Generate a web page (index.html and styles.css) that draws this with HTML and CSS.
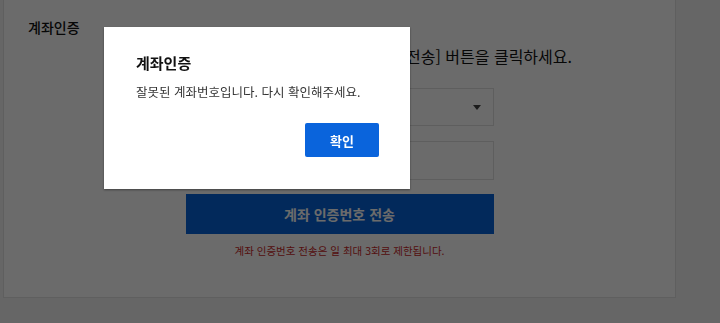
FILE: index.html
```html
<!DOCTYPE html>
<html lang="ko">
<head>
  <meta charset="UTF-8">
  <title>계좌인증</title>
  <link rel="stylesheet" href="styles.css">
</head>
<body>
  <div class="page">
    <div class="card">
      <h2 class="card-title">계좌인증</h2>
      <p class="guide">계좌번호 입력 후 [계좌 인증번호 전송] 버튼을 클릭하세요.</p>

      <div class="form">
        <div class="select-box">
          <span class="arrow"></span>
        </div>
        <input type="text" class="field">
        <button class="send-btn">계좌 인증번호 전송</button>
        <p class="notice">계좌 인증번호 전송은 일 최대 3회로 제한됩니다.</p>
      </div>
    </div>
  </div>

  <div class="dim"></div>

  <div class="modal">
    <h3 class="modal-title">계좌인증</h3>
    <p class="modal-msg">잘못된 계좌번호입니다. 다시 확인해주세요.</p>
    <div class="modal-foot">
      <button class="ok-btn">확인</button>
    </div>
  </div>
</body>
</html>
```

FILE: styles.css
```css
body {
  margin: 0;
  background-color: #f3f3f3;
  font-family: 'Noto Sans CJK KR', 'Noto Sans', sans-serif;
  color: #222;
}

.page {
  padding-left: 3px;
  width: 673px;
}

.card {
  background-color: white;
  border: 1px solid #e2e2e2;
  border-top: none;
  height: 298px;
  padding: 17px 24px 0;
  box-sizing: border-box;
}

.card-title {
  margin: 0;
  font-size: 14px;
  line-height: 20px;
  font-weight: 500;
  color: #111;
}

.guide {
  margin: 8px 0 0;
  font-size: 16px;
  line-height: 22px;
  white-space: nowrap;
  text-align: right;
  padding-right: 79px;
  color: #111;
}

.form {
  width: 308px;
  margin: 21px auto 0;
  display: flex;
  flex-direction: column;
}

.select-box {
  height: 38px;
  border: 1px solid #e0e0e0;
  box-sizing: border-box;
  display: flex;
  align-items: center;
  justify-content: flex-end;
  padding: 0 12px;
}

.arrow {
  width: 0;
  height: 0;
  border-left: 4px solid transparent;
  border-right: 4px solid transparent;
  border-top: 5px solid #444;
}

.field {
  height: 39px;
  margin-top: 15px;
  border: 1px solid #e0e0e0;
  box-sizing: border-box;
  font-size: 14px;
  padding: 0 12px;
}

.send-btn {
  height: 40px;
  margin-top: 14px;
  border: none;
  background-color: #0663d8;
  color: #ffffff;
  font-family: inherit;
  font-size: 14px;
  font-weight: 700;
}

.notice {
  margin: 10px 0 0;
  font-size: 10.5px;
  line-height: 14px;
  text-align: center;
  color: #c82828;
  white-space: nowrap;
}

.dim {
  position: fixed;
  inset: 0;
  background-color: rgba(0, 0, 0, 0.58);
}

.modal {
  position: absolute;
  left: 104px;
  top: 27px;
  width: 306px;
  height: 162px;
  box-sizing: border-box;
  background-color: white;
  padding: 25px 31px 0 32px;
  box-shadow: 0 1px 2px rgba(0, 0, 0, 0.4);
}

.modal-title {
  margin: 0;
  font-size: 15px;
  line-height: 22px;
  font-weight: 700;
  color: #111;
}

.modal-msg {
  margin: 8px 0 0;
  font-size: 12.5px;
  line-height: 20px;
  color: #333;
  white-space: nowrap;
}

.modal-foot {
  display: flex;
  justify-content: flex-end;
  margin-top: 21px;
}

.ok-btn {
  width: 74px;
  height: 34px;
  border: none;
  border-radius: 2px;
  background-color: #0a64dc;
  color: white;
  font-family: inherit;
  font-size: 13px;
  font-weight: 700;
}
```
